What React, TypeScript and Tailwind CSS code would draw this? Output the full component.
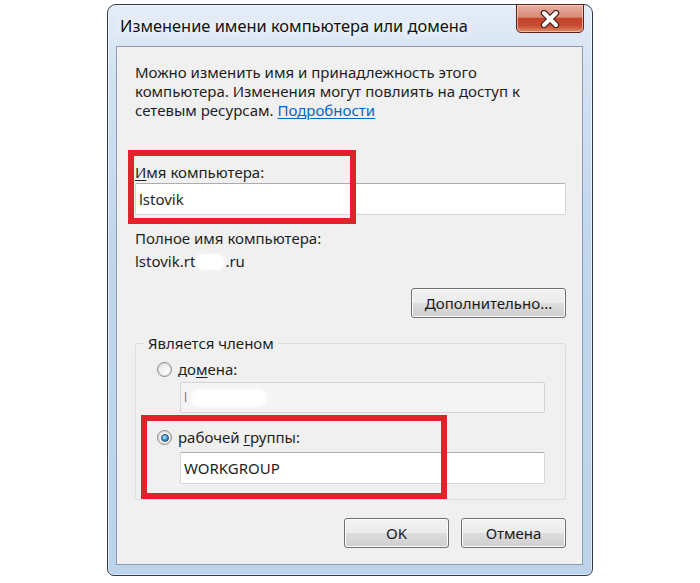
import React from "react";

const font = "font-['Noto_Sans','Liberation_Sans',sans-serif]";

const Radio = ({ checked }: { checked?: boolean }) => (
  <span className="flex h-[15px] w-[15px] items-center justify-center rounded-full border border-[#8a8a8a] bg-gradient-to-br from-[#e4e4e4] via-[#f4f4f4] to-[#ffffff] shadow-[inset_0_0_0_1px_#d6d6d6]">
    {checked && (
      <span className="h-[8px] w-[8px] rounded-full border border-[#1b4f7c] bg-[radial-gradient(circle_at_40%_35%,#bfe6ff,#3c8fd0_55%,#1c5d98)]" />
    )}
  </span>
);

const WinButton = ({
  children,
  className = "",
}: {
  children: React.ReactNode;
  className?: string;
}) => (
  <button
    className={`h-[30px] rounded-[3px] border border-[#707070] bg-[linear-gradient(#f2f2f2_0%,#ebebeb_49%,#dddddd_50%,#cfcfcf_100%)] text-[15px] text-[#1a1a1a] shadow-[inset_0_0_0_1px_#fcfcfc] ${className}`}
  >
    {children}
  </button>
);

export default function App() {
  return (
    <div className={`h-[583px] w-[700px] overflow-hidden bg-white pl-[107px] pt-[4px] ${font}`}>
      <div className="flex h-[572px] w-[486px] flex-col rounded-t-[9px] rounded-b-[7px] border border-[#2f3b4a] bg-[linear-gradient(#e4edf8_0%,#d3e2f3_12%,#c2d7ee_40%,#bcd3ec_100%)] shadow-[inset_0_0_0_1px_rgba(255,255,255,0.55)]">
        {/* title bar */}
        <div className="flex h-[41px] items-start justify-between">
          <div className="pl-[12px] pt-[9px] text-[16.4px] leading-[24px] text-[#111] [text-shadow:0_0_10px_#fff,0_0_14px_#fff]">
            Изменение имени компьютера или домена
          </div>
          <div className="-mt-[1px] mr-[8px] flex h-[29px] w-[68px] items-center justify-center rounded-b-[5px] border border-[#5b2418] bg-[linear-gradient(#eab0a2_0%,#d98a76_45%,#c4442b_50%,#c84a30_75%,#e08a63_100%)] shadow-[inset_0_0_0_1px_rgba(255,220,210,0.6)]">
            <svg width="26" height="18" viewBox="0 0 26 18">
              <path d="M7 3 L19 15 M19 3 L7 15" stroke="#4a2018" strokeWidth="6.5" strokeLinecap="round" />
              <path d="M7 3 L19 15 M19 3 L7 15" stroke="#ffffff" strokeWidth="4" strokeLinecap="round" />
            </svg>
          </div>
        </div>

        {/* client area */}
        <div className="relative mb-[10px] ml-[8px] mr-[9px] flex flex-1 flex-col border border-[#8e9bab] bg-[#f0f0f0] pl-[18px] pr-[16px] text-[15px] leading-[19px] text-[#1e1e1e]">
          <p className="pt-[16px]">
            Можно изменить имя и принадлежность этого
            <br />
            компьютера. Изменения могут повлиять на доступ к
            <br />
            сетевым ресурсам.{" "}
            <span className="text-[#0066cc] underline underline-offset-2">Подробности</span>
          </p>

          <div className="mt-[43px]">
            <span className="underline underline-offset-2">И</span>мя компьютера:
          </div>
          <div className="mt-[1px] flex h-[32px] items-center rounded-[2px] border border-[#d3d6db] border-t-[#abadb3] bg-white pl-[3px]">
            lstovik
          </div>

          <div className="mt-[14px]">Полное имя компьютера:</div>
          <div className="mt-[4px] flex items-center">
            lstovik.rt
            <span className="inline-block h-[16px] w-[30px] rounded-full bg-white blur-[1px]" />
            .ru
          </div>

          <div className="mt-[17px] flex justify-end">
            <WinButton className="w-[155px]">
              <span className="underline underline-offset-2">Д</span>ополнительно...
            </WinButton>
          </div>

          {/* group box */}
          <div className="relative mt-[25px] h-[157px] rounded-[3px] border border-[#d5dfe5] pl-[21px] pr-[20px]">
            <div className="absolute -top-[10px] left-[8px] bg-[#f0f0f0] px-[4px]">Является членом</div>
            <div className="mt-[16px] flex items-center gap-[6px]">
              <Radio />
              <span>
                до<span className="underline underline-offset-2">м</span>ена:
              </span>
            </div>
            <div className="ml-[23px] mt-[3px] flex h-[31px] items-center rounded-[2px] border border-[#cfd2d6] bg-[#f4f4f4] pl-[3px] text-[#777]">
              <span className="text-[12px]">l</span>
              <span className="ml-[4px] inline-block h-[18px] w-[76px] rounded-full bg-white blur-[1.5px]" />
            </div>
            <div className="mt-[15px] flex items-center gap-[6px]">
              <Radio checked />
              <span>
                рабочей <span className="underline underline-offset-2">г</span>руппы:
              </span>
            </div>
            <div className="ml-[23px] mt-[5px] flex h-[32px] items-center rounded-[2px] border border-[#d3d6db] border-t-[#abadb3] bg-white pl-[3px]">
              WORKGROUP
            </div>
          </div>

          <div className="mt-[18px] flex justify-end gap-[12px]">
            <WinButton className="w-[105px]">OK</WinButton>
            <WinButton className="w-[105px]">Отмена</WinButton>
          </div>

          {/* red annotation frames */}
          <div className="pointer-events-none absolute left-[11px] top-[103px] h-[74px] w-[228px] border-[6px] border-[#e1222b]" />
          <div className="pointer-events-none absolute left-[24px] top-[368px] h-[84px] w-[306px] border-[6px] border-[#e1222b]" />
        </div>
      </div>
    </div>
  );
}
